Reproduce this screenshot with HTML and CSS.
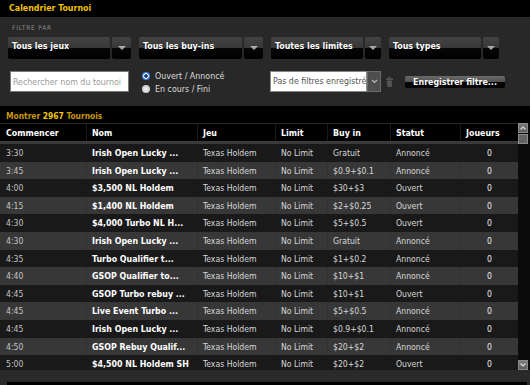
FILE: index.html
```html
<!DOCTYPE html>
<html>
<head>
    <meta charset="UTF-8">
    <title>Calendrier Tournoi</title>
    <link rel="stylesheet" href="styles.css">
</head>
<body>
    <div class="titlebar">Calendrier Tournoi</div>

    <div class="filters">
        <div class="filters-label">FILTRE PAR</div>

        <div class="dropdowns">
            <div class="dropdown">
                <span class="dd-value dd-wide">Tous les jeux</span>
                <span class="dd-arrow"></span>
            </div>
            <div class="dropdown">
                <span class="dd-value dd-wider">Tous les buy-ins</span>
                <span class="dd-arrow"></span>
            </div>
            <div class="dropdown">
                <span class="dd-value">Toutes les limites</span>
                <span class="dd-arrow dd-arrow-small"></span>
            </div>
            <div class="dropdown">
                <span class="dd-value">Tous types</span>
                <span class="dd-arrow dd-arrow-small"></span>
            </div>
        </div>

        <div class="search-row">
            <input type="text" class="search" placeholder="Rechercher nom du tournoi">

            <div class="status-radios">
                <label class="radio"><span class="radio-dot checked"></span>Ouvert / Annoncé</label>
                <label class="radio"><span class="radio-dot"></span>En cours / Fini</label>
            </div>

            <div class="saved-filter">
                <span class="saved-value">Pas de filtres enregistrés</span>
                <span class="saved-arrow">
                    <svg width="7" height="5" viewBox="0 0 7 5"><path d="M1 1 L3.5 3.5 L6 1" fill="none" stroke="#bbb" stroke-width="1.2"/></svg>
                </span>
            </div>

            <svg class="trash" width="7" height="10" viewBox="0 0 7 10">
                <rect x="2" y="0" width="3" height="1.5" fill="#555"/>
                <rect x="0" y="1.5" width="7" height="1.5" fill="#555"/>
                <path d="M0.8 3.6 H6.2 L5.7 10 H1.3 Z" fill="#555"/>
            </svg>

            <button class="save-btn">Enregistrer filtre...</button>
        </div>
    </div>

    <div class="count">Montrer <b>2967</b> Tournois</div>

    <div class="grid">
        <div class="table">
            <div class="row head">
                <div class="cell">Commencer</div>
                <div class="cell">Nom</div>
                <div class="cell">Jeu</div>
                <div class="cell">Limit</div>
                <div class="cell">Buy in</div>
                <div class="cell">Statut</div>
                <div class="cell">Joueurs</div>
            </div>

            <div class="body">
                <div class="row">
                    <div class="cell time">3:30</div><div class="cell name">Irish Open Lucky ...</div><div class="cell">Texas Holdem</div><div class="cell">No Limit</div><div class="cell">Gratuit</div><div class="cell">Annoncé</div><div class="cell players">0</div>
                </div>
                <div class="row">
                    <div class="cell time">3:45</div><div class="cell name">Irish Open Lucky ...</div><div class="cell">Texas Holdem</div><div class="cell">No Limit</div><div class="cell">$0.9+$0.1</div><div class="cell">Annoncé</div><div class="cell players">0</div>
                </div>
                <div class="row">
                    <div class="cell time">4:00</div><div class="cell name">$3,500 NL Holdem</div><div class="cell">Texas Holdem</div><div class="cell">No Limit</div><div class="cell">$30+$3</div><div class="cell">Ouvert</div><div class="cell players">0</div>
                </div>
                <div class="row">
                    <div class="cell time">4:15</div><div class="cell name">$1,400 NL Holdem</div><div class="cell">Texas Holdem</div><div class="cell">No Limit</div><div class="cell">$2+$0.25</div><div class="cell">Ouvert</div><div class="cell players">0</div>
                </div>
                <div class="row">
                    <div class="cell time">4:30</div><div class="cell name">$4,000 Turbo NL H...</div><div class="cell">Texas Holdem</div><div class="cell">No Limit</div><div class="cell">$5+$0.5</div><div class="cell">Ouvert</div><div class="cell players">0</div>
                </div>
                <div class="row">
                    <div class="cell time">4:30</div><div class="cell name">Irish Open Lucky ...</div><div class="cell">Texas Holdem</div><div class="cell">No Limit</div><div class="cell">Gratuit</div><div class="cell">Annoncé</div><div class="cell players">0</div>
                </div>
                <div class="row">
                    <div class="cell time">4:35</div><div class="cell name">Turbo Qualifier t...</div><div class="cell">Texas Holdem</div><div class="cell">No Limit</div><div class="cell">$1+$0.2</div><div class="cell">Annoncé</div><div class="cell players">0</div>
                </div>
                <div class="row">
                    <div class="cell time">4:40</div><div class="cell name">GSOP Qualifier to...</div><div class="cell">Texas Holdem</div><div class="cell">No Limit</div><div class="cell">$10+$1</div><div class="cell">Annoncé</div><div class="cell players">0</div>
                </div>
                <div class="row">
                    <div class="cell time">4:45</div><div class="cell name">GSOP Turbo rebuy ...</div><div class="cell">Texas Holdem</div><div class="cell">No Limit</div><div class="cell">$10+$1</div><div class="cell">Ouvert</div><div class="cell players">0</div>
                </div>
                <div class="row">
                    <div class="cell time">4:45</div><div class="cell name">Live Event Turbo ...</div><div class="cell">Texas Holdem</div><div class="cell">No Limit</div><div class="cell">$5+$0.5</div><div class="cell">Annoncé</div><div class="cell players">0</div>
                </div>
                <div class="row">
                    <div class="cell time">4:45</div><div class="cell name">Irish Open Lucky ...</div><div class="cell">Texas Holdem</div><div class="cell">No Limit</div><div class="cell">$0.9+$0.1</div><div class="cell">Annoncé</div><div class="cell players">0</div>
                </div>
                <div class="row">
                    <div class="cell time">4:50</div><div class="cell name">GSOP Rebuy Qualif...</div><div class="cell">Texas Holdem</div><div class="cell">No Limit</div><div class="cell">$20+$2</div><div class="cell">Annoncé</div><div class="cell players">0</div>
                </div>
                <div class="row">
                    <div class="cell time">5:00</div><div class="cell name">$4,500 NL Holdem SH</div><div class="cell">Texas Holdem</div><div class="cell">No Limit</div><div class="cell">$20+$2</div><div class="cell">Ouvert</div><div class="cell players">0</div>
                </div>
            </div>
        </div>

        <div class="scrollbar">
            <div class="sb-btn">
                <svg width="6" height="4" viewBox="0 0 6 4"><path d="M0.5 3.5 L3 1 L5.5 3.5" fill="none" stroke="#ddd" stroke-width="1.1"/></svg>
            </div>
            <div class="sb-thumb"></div>
            <div class="sb-track"></div>
            <div class="sb-btn">
                <svg width="6" height="4" viewBox="0 0 6 4"><path d="M0.5 0.5 L3 3 L5.5 0.5" fill="none" stroke="#ddd" stroke-width="1.1"/></svg>
            </div>
        </div>
    </div>

    <div class="footer"></div>
    <div class="footer-edge"></div>
</body>
</html>
```

FILE: styles.css
```css
body {
    font-family: "DejaVu Sans Condensed", "DejaVu Sans", Tahoma, sans-serif;
    font-size: 8.6px;
    margin: 0;
    width: 530px;
    height: 385px;
    overflow: hidden;
    background-color: #000;
    color: #d8d8d8;
}

.titlebar {
    height: 17px;
    line-height: 17px;
    padding-left: 9px;
    color: #f2c200;
    font-weight: bold;
    font-size: 8.8px;
}

/* Zone des filtres */
.filters {
    height: 89px;
    box-sizing: border-box;
    padding: 7px 0 0 8px;
    background-color: #282828;
}

.filters-label {
    height: 9px;
    line-height: 9px;
    padding-left: 4px;
    font-size: 6.5px;
    letter-spacing: 0.8px;
    color: #8a8a8a;
}

.dropdowns {
    display: flex;
    gap: 8px;
    margin-top: 4px;
    height: 22px;
}

.dropdown {
    display: flex;
    gap: 2px;
}

.dd-value,
.dd-arrow {
    height: 22px;
    border-radius: 2px;
    background: linear-gradient(#434343, #373737 50%, #070707 50%, #000);
}

.dd-value {
    width: 92px;
    box-sizing: border-box;
    padding-left: 4px;
    line-height: 19px;
    color: #fff;
    font-weight: bold;
    font-size: 8.8px;
    text-shadow: 0 1px 1px #000;
    white-space: nowrap;
}

.dd-wide {
    width: 102px;
}

.dd-wider {
    width: 103px;
}

.dd-arrow {
    width: 19px;
    display: flex;
    align-items: center;
    justify-content: center;
}

.dd-arrow-small {
    width: 16px;
}

.dd-arrow::after {
    content: "";
    border-left: 4px solid transparent;
    border-right: 4px solid transparent;
    border-top: 4px solid #a8a8a8;
}

.search-row {
    display: flex;
    align-items: flex-start;
    margin-top: 12px;
    height: 21px;
}

.search {
    width: 119px;
    height: 21px;
    margin: 0 0 0 2px;
    box-sizing: border-box;
    padding: 0 2px;
    border: 1px solid #7a7a7a;
    background-color: #fff;
    font-family: inherit;
    font-size: 8.8px;
    outline: none;
}

.search::placeholder {
    color: #9a9a9a;
}

.status-radios {
    width: 128px;
    margin: -2px 0 0 13px;
    display: flex;
    flex-direction: column;
}

.radio {
    display: flex;
    align-items: center;
    gap: 5px;
    height: 13px;
    color: #dcdcdc;
    font-size: 8.8px;
}

.radio-dot {
    width: 8px;
    height: 8px;
    border-radius: 50%;
    background: radial-gradient(circle, #f4f4f4, #b8b8b8);
}

.radio-dot.checked {
    background: radial-gradient(circle, #163a7a 0 1.5px, #fff 2px 2.5px, #3d88ea 3px);
}

.saved-filter {
    display: flex;
    height: 21px;
}

.saved-value {
    width: 97px;
    box-sizing: border-box;
    padding-left: 2px;
    border: 1px solid #888;
    background-color: #fff;
    color: #555;
    line-height: 19px;
    font-size: 8.8px;
    white-space: nowrap;
    overflow: hidden;
}

.saved-arrow {
    width: 14px;
    box-sizing: border-box;
    border: 1px solid #6a6a6a;
    background-color: #4e4e4e;
    display: flex;
    align-items: center;
    justify-content: center;
}

.trash {
    margin: 6px 0 0 5px;
}

.save-btn {
    width: 100px;
    height: 12px;
    margin: 5px 0 0 12px;
    padding: 0;
    border: none;
    border-radius: 2px;
    background: linear-gradient(#6a6a6a, #505050 50%, #050505 50%, #000);
    color: #fff;
    font-family: inherit;
    font-weight: bold;
    font-size: 8.8px;
    line-height: 12px;
    text-shadow: 0 1px 1px #000;
}

/* Compteur */
.count {
    height: 14px;
    padding: 3px 0 0 6px;
    line-height: 14px;
    color: #c8960c;
    font-weight: bold;
    font-size: 8.4px;
}

.count b {
    color: #f4c800;
}

/* Liste des tournois */
.grid {
    display: flex;
    height: 247px;
}

.table {
    width: 518px;
    overflow: hidden;
}

.row {
    display: grid;
    grid-template-columns: 86px 111px 78px 52px 63px 70px 58px;
    height: 17.6px;
    line-height: 17.6px;
    background-color: #191919;
}

.body .row:nth-child(even) {
    background-color: #373737;
}

.row.head {
    height: 17px;
    line-height: 17px;
    border-top: 1px solid #262626;
    border-bottom: 3px solid #3a3a3a;
    background-color: #000;
    color: #fff;
    font-weight: bold;
    font-size: 8.8px;
}

.body {
    height: 226px;
    overflow: hidden;
}

.cell {
    padding: 1px 0 0 5px;
    white-space: nowrap;
    overflow: hidden;
    border-left: 1px solid transparent;
}

.body .row:nth-child(even) .cell {
    border-left-color: rgba(0, 0, 0, 0.12);
}

.row .cell:first-child {
    padding-left: 6px;
    border-left: none;
}

.head .cell {
    border-left-color: #1a1a1a;
}

.cell.time {
    color: #c4c4c4;
}

.cell.name {
    color: #fff;
    font-weight: bold;
    font-size: 8.8px;
}

.cell.players {
    padding-left: 0;
    text-align: center;
    color: #eee;
}

.scrollbar {
    width: 10px;
    padding-right: 2px;
    display: flex;
    flex-direction: column;
    background-color: #0b0b0b;
}

.sb-btn {
    height: 10px;
    box-sizing: border-box;
    border: 1px solid #8a8a8a;
    background: linear-gradient(#7a7a7a, #5c5c5c);
    display: flex;
    align-items: center;
    justify-content: center;
}

.sb-thumb {
    height: 10px;
    margin-top: 1px;
    box-sizing: border-box;
    border: 1px solid #8c8c8c;
    background-color: #626262;
}

.sb-track {
    flex: 1;
}

.footer {
    height: 12px;
    background-color: #2a2a2a;
}

.footer-edge {
    height: 3px;
    background: linear-gradient(to right, #2a2a2a 7px, #000 7px 527px, #2a2a2a 527px);
}
```
